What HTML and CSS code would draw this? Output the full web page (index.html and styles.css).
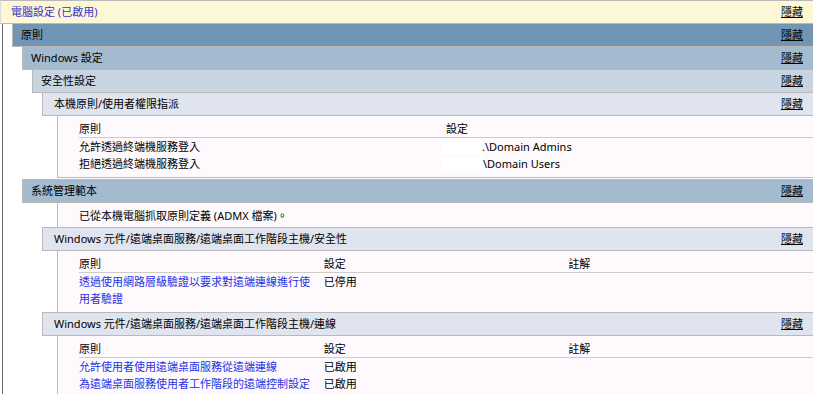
FILE: index.html
```html
<!DOCTYPE html>
<html lang="zh-Hant">
<head>
<meta charset="utf-8">
<title>電腦設定</title>
<link rel="stylesheet" href="styles.css">
</head>
<body>
<div class="bar lvl0 top"><span class="title">電腦設定 (已啟用)</span><a class="hide">隱藏</a></div>
<div class="tree">
  <div class="bar lvl1"><span>原則</span><a class="hide">隱藏</a></div>
  <div class="bar lvl2"><span>Windows 設定</span><a class="hide">隱藏</a></div>
  <div class="bar lvl3"><span>安全性設定</span><a class="hide">隱藏</a></div>
  <div class="bar lvl4"><span>本機原則/使用者權限指派</span><a class="hide">隱藏</a></div>
  <div class="box closed">
    <table class="info">
      <thead><tr><th>原則</th><th>設定</th></tr></thead>
      <tbody>
        <tr><td>允許透過終端機服務登入</td><td><span class="redact r1"></span>.\Domain Admins</td></tr>
        <tr><td>拒絕透過終端機服務登入</td><td><span class="redact r2"></span>\Domain Users</td></tr>
      </tbody>
    </table>
  </div>
  <div class="bar lvl2 top"><span>系統管理範本</span><a class="hide">隱藏</a></div>
  <div class="box short">已從本機電腦抓取原則定義 (ADMX 檔案)。</div>
  <div class="bar lvl4 top"><span>Windows 元件/遠端桌面服務/遠端桌面工作階段主機/安全性</span><a class="hide">隱藏</a></div>
  <div class="box">
    <table class="info3">
      <thead><tr><th>原則</th><th>設定</th><th>註解</th></tr></thead>
      <tbody>
        <tr><td><a class="link">透過使用網路層級驗證以要求對遠端連線進行使用者驗證</a></td><td>已停用</td><td></td></tr>
      </tbody>
    </table>
  </div>
  <div class="bar lvl4 top"><span>Windows 元件/遠端桌面服務/遠端桌面工作階段主機/連線</span><a class="hide">隱藏</a></div>
  <div class="box">
    <table class="info3">
      <thead><tr><th>原則</th><th>設定</th><th>註解</th></tr></thead>
      <tbody>
        <tr><td><a class="link">允許使用者使用遠端桌面服務從遠端連線</a></td><td>已啟用</td><td></td></tr>
        <tr><td><a class="link">為遠端桌面服務使用者工作階段的遠端控制設定</a></td><td>已啟用</td><td></td></tr>
      </tbody>
    </table>
  </div>
</div>
</body>
</html>
```

FILE: styles.css
```css
* { box-sizing: border-box; }

html, body {
  margin: 0;
  padding: 0;
  background: #ffffff;
}

body {
  width: 813px;
  height: 394px;
  overflow: hidden;
  font-family: "Noto Sans", "Noto Sans CJK TC", sans-serif;
  font-size: 11px;
  color: #000000;
}

.tree {
  margin-left: 2px;
  border-left: 1px solid #6e6e6e;
  min-height: 370px;
}

.bar {
  display: flex;
  justify-content: space-between;
  align-items: center;
  height: 23px;
  line-height: 22px;
  border-left: 1px solid #b9b9b9;
  border-bottom: 1px solid #b9b9b9;
  padding-right: 10px;
  white-space: nowrap;
}

.bar.top {
  height: 24px;
  border-top: 1px solid #b9b9b9;
}

.hide {
  color: #000000;
  text-decoration: underline;
}

.lvl0 {
  background: #fef7d6;
  padding-left: 10px;
  border-left-color: #dcdcdc;
}

.lvl0 .title { color: #3333cc; }

.lvl1 {
  background: #7196b4;
  margin-left: 9px;
  padding-left: 8px;
}

.lvl2 {
  background: #a4bbcf;
  margin-left: 19px;
  padding-left: 8px;
}

.lvl3 {
  background: #c8d5e0;
  margin-left: 29px;
  padding-left: 8px;
}

.lvl4 {
  background: #dfe4ef;
  margin-left: 39px;
  padding-left: 11px;
}

.box {
  margin-left: 54px;
  border-left: 1px solid #bbbbbb;
  background: #fdf9fd;
  padding: 4px 0 5px 21px;
  line-height: 17px;
}

.box.closed {
  border-bottom: 1px solid #bbbbbb;
  margin-bottom: 1px;
}

.box.short {
  padding-bottom: 3px;
}

table {
  width: 100%;
  border-collapse: collapse;
  table-layout: fixed;
}

th {
  text-align: left;
  font-weight: normal;
  line-height: 17px;
  padding: 0 10px 0 0;
  border-bottom: 1px solid #cccccc;
}

td {
  line-height: 17px;
  padding: 0 10px 0 0;
  vertical-align: top;
}

.link { color: #1f33e4; }

.redact {
  display: inline-block;
  height: 14px;
  background: #ffffff;
  vertical-align: -3px;
}

.redact.r1 { width: 40px; margin-left: -4px; }
.redact.r2 { width: 42px; margin-left: -5px; }
```
